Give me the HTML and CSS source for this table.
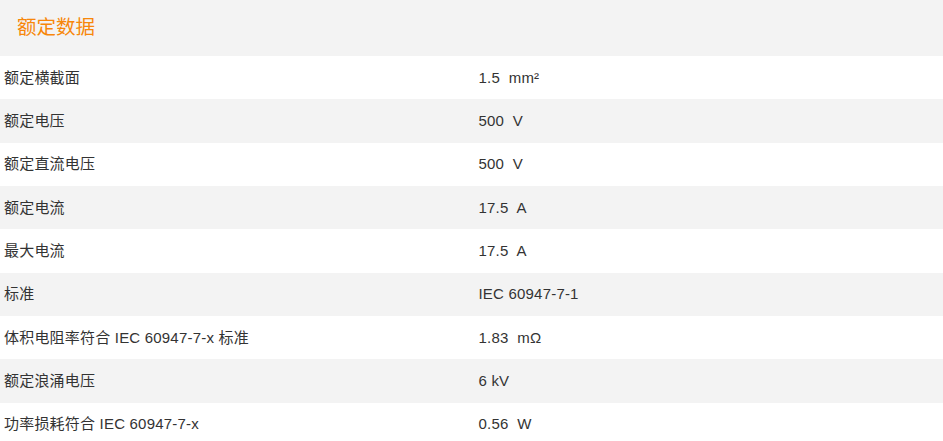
FILE: index.html
```html
<!DOCTYPE html>
<html lang="zh">
<head>
<meta charset="utf-8">
<title>额定数据</title>
<link rel="stylesheet" href="styles.css">
</head>
<body>
<section class="panel">
  <header class="panel-head"><h2 class="panel-title">额定数据</h2></header>
  <div class="table">
    <div class="row"><div class="cell label">额定横截面</div><div class="cell value">1.5&nbsp; mm²</div></div>
    <div class="row alt"><div class="cell label">额定电压</div><div class="cell value">500&nbsp; V</div></div>
    <div class="row"><div class="cell label">额定直流电压</div><div class="cell value">500&nbsp; V</div></div>
    <div class="row alt"><div class="cell label">额定电流</div><div class="cell value">17.5&nbsp; A</div></div>
    <div class="row"><div class="cell label">最大电流</div><div class="cell value">17.5&nbsp; A</div></div>
    <div class="row alt"><div class="cell label">标准</div><div class="cell value">IEC 60947-7-1</div></div>
    <div class="row"><div class="cell label">体积电阻率符合 IEC 60947-7-x 标准</div><div class="cell value">1.83&nbsp; mΩ</div></div>
    <div class="row alt"><div class="cell label">额定浪涌电压</div><div class="cell value">6 kV</div></div>
    <div class="row"><div class="cell label">功率损耗符合 IEC 60947-7-x</div><div class="cell value">0.56&nbsp; W</div></div>
  </div>
</section>
</body>
</html>
```
FILE: styles.css
```css
html, body {
  margin: 0;
  padding: 0;
  background: #ffffff;
}
body {
  font-family: "Liberation Sans", "Noto Sans CJK SC", sans-serif;
  color: #333333;
}
.panel-head {
  height: 56px;
  background: #f3f3f3;
  display: flex;
  align-items: center;
  padding-left: 17px;
}
.panel-title {
  margin: 0;
  font-weight: normal;
  font-size: 19.5px;
  color: #f7870a;
  line-height: 1;
}
.table {
  display: grid;
  grid-auto-rows: 43.33px;
}
.row {
  display: grid;
  grid-template-columns: 1fr 1fr;
  align-items: center;
  background: #ffffff;
  font-size: 15px;
  line-height: 18px;
  letter-spacing: 0.2px;
}
.row.alt {
  background: #f3f3f3;
}
.cell.label {
  padding-left: 4px;
}
.cell.value {
  padding-left: 7px;
}
```
